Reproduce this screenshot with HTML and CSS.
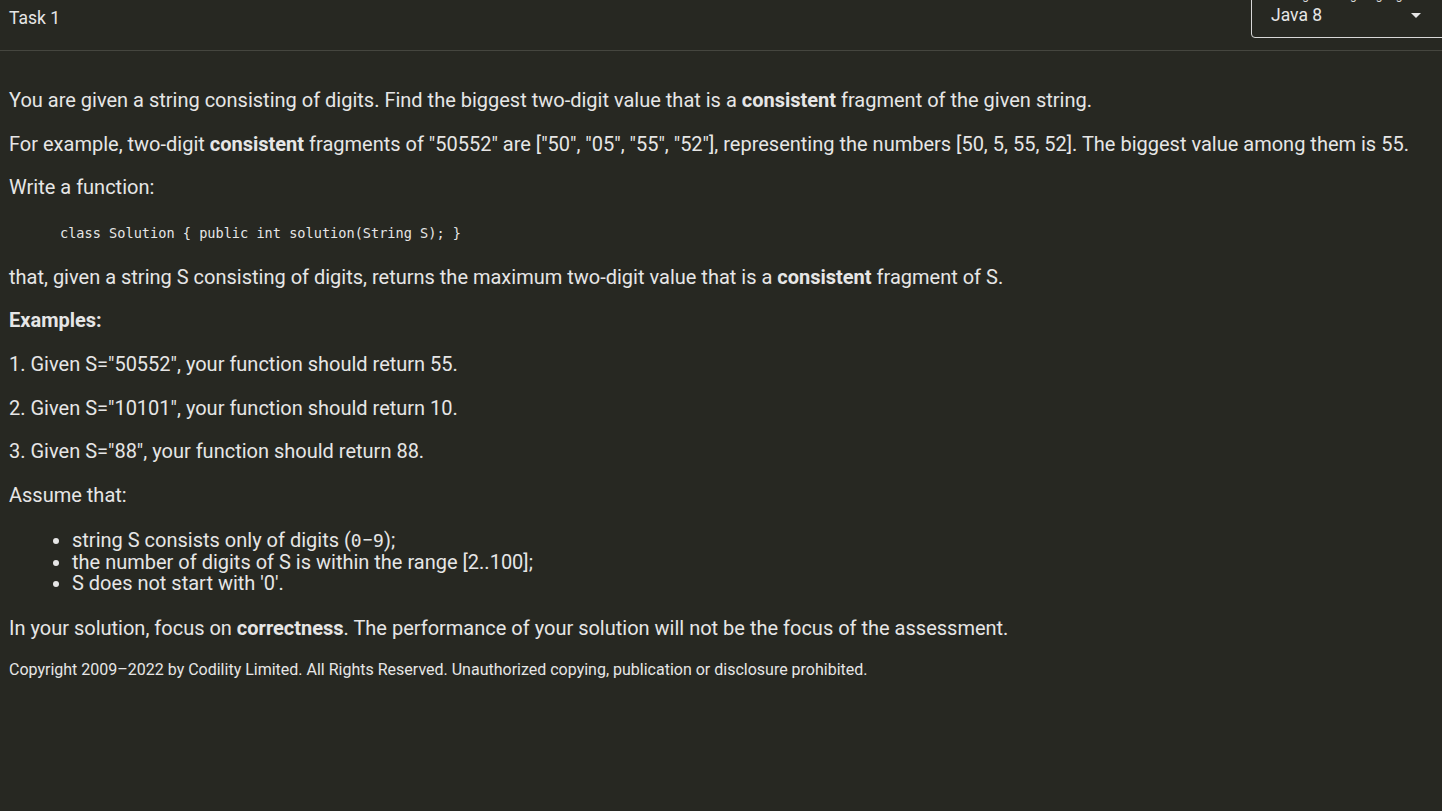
FILE: index.html
```html
<!DOCTYPE html>
<html>
<head>
<meta charset="utf-8">
<link rel="stylesheet" href="styles.css">
</head>
<body>
<header class="topbar">
  <div class="task-title">Task 1</div>
  <div class="lang-select">
    <span class="lang-caption">Programming language</span>
    <span class="lang-label">Java 8</span>
    <span class="caret"></span>
  </div>
</header>
<main class="content">
  <p>You are given a string consisting of digits. Find the biggest two-digit value that is a <b>consistent</b> fragment of the given string.</p>
  <p>For example, two-digit <b>consistent</b> fragments of "50552" are ["50", "05", "55", "52"], representing the numbers [50, 5, 55, 52]. The biggest value among them is 55.</p>
  <p>Write a function:</p>
  <pre class="code">class Solution { public int solution(String S); }</pre>
  <p>that, given a string S consisting of digits, returns the maximum two-digit value that is a <b>consistent</b> fragment of S.</p>
  <p><b>Examples:</b></p>
  <p>1. Given S="50552", your function should return 55.</p>
  <p>2. Given S="10101", your function should return 10.</p>
  <p>3. Given S="88", your function should return 88.</p>
  <p>Assume that:</p>
  <ul class="assume">
    <li>string S consists only of digits (<tt class="mono">0</tt>−<tt class="mono">9</tt>);</li>
    <li>the number of digits of S is within the range [2..100];</li>
    <li>S does not start with '0'.</li>
  </ul>
  <p>In your solution, focus on <b>correctness</b>. The performance of your solution will not be the focus of the assessment.</p>
  <p class="copyright">Copyright 2009–2022 by Codility Limited. All Rights Reserved. Unauthorized copying, publication or disclosure prohibited.</p>
</main>
</body>
</html>
```

FILE: styles.css
```css
html, body {
  margin: 0;
  padding: 0;
  background: #272822;
  color: #e6e6e6;
  font-family: Roboto, "Liberation Sans", sans-serif;
  height: 100%;
  overflow: hidden;
}
.topbar {
  height: 50px;
  border-bottom: 1px solid #45463f;
  display: flex;
  justify-content: space-between;
  align-items: flex-start;
  box-sizing: content-box;
}
.task-title {
  font-size: 17.5px;
  padding: 8px 0 0 9px;
  line-height: 20px;
}
.lang-select {
  position: relative;
  width: 201px;
  height: 46px;
  margin-top: -8px;
  margin-right: -10px;
  border: 1px solid #d8d8d8;
  border-radius: 4px;
  display: flex;
  align-items: center;
  justify-content: space-between;
  padding: 0 30px 0 19px;
  box-sizing: border-box;
  font-size: 17.5px;
}
.lang-caption {
  position: absolute;
  left: 32px;
  top: -4px;
  font-size: 12px;
  line-height: 12px;
  color: #d8d8d8;
  white-space: nowrap;
}
.caret {
  width: 0;
  height: 0;
  border-left: 5px solid transparent;
  border-right: 5px solid transparent;
  border-top: 5px solid #e6e6e6;
}
.content {
  padding: 21px 9px 0;
  font-size: 20px;
}
.content p {
  margin: 14px 0;
  line-height: 29.6px;
}
.content b {
  font-weight: 700;
}
.code {
  font-family: "DejaVu Sans Mono", monospace;
  font-size: 13.6px;
  margin: 0 0 0 51px;
  padding: 8px 0;
  line-height: 16px;
}
.assume {
  margin: 20px 0;
  padding-left: 63px;
  line-height: 21.3px;
}
.mono {
  font-family: "DejaVu Sans Mono", monospace;
  font-size: 18px;
}
.content p.copyright {
  font-size: 16px;
  line-height: 20px;
  margin-top: 16px;
}
```
